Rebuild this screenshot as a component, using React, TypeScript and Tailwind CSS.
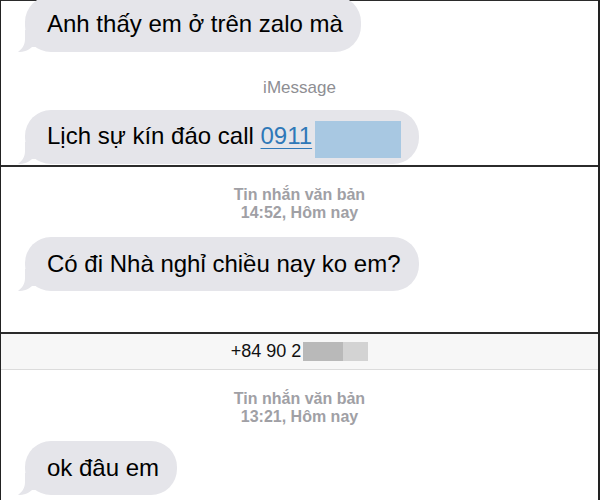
import { type ReactNode } from "react";

const Tail = () => (
  <svg
    className="absolute bottom-0 left-[-7px]"
    width="22"
    height="22"
    viewBox="0 0 22 22"
  >
    <path
      d="M7 0 L7 9 C7 15 4 19 0 22 C6 22 11 20 14 17 L22 17 L22 0 Z"
      fill="#e5e5ea"
    />
  </svg>
);

const Bubble = ({
  children,
  className = "",
}: {
  children: ReactNode;
  className?: string;
}) => (
  <div
    className={`relative ml-[24px] flex h-[54px] w-fit items-center rounded-[26px] bg-[#e5e5ea] pl-[22px] pr-[18px] text-[24px] text-black ${className}`}
  >
    <Tail />
    <span className="relative whitespace-nowrap">{children}</span>
  </div>
);

const Stamp = ({ time }: { time: string }) => (
  <div className="flex flex-col items-center text-[16px] font-semibold leading-[18px] text-[#a0a0a5]">
    <span>Tin nhắn văn bản</span>
    <span>{time}, Hôm nay</span>
  </div>
);

export default function App() {
  return (
    <div
      className="h-[500px] w-[600px] overflow-hidden border-l border-r-2 border-[#222] bg-white"
      style={{ fontFamily: '"Liberation Sans", Arial, sans-serif' }}
    >
      <div className="flex h-[167px] flex-col border-t border-b-2 border-[#2b2b2b]">
        <Bubble className="mt-[-5px] h-[56px]">Anh thấy em ở trên zalo mà</Bubble>
        <div className="mt-[26px] text-center text-[17px] leading-[20px] text-[#8e8e93]">
          iMessage
        </div>
        <Bubble className="mt-[12px] h-[53px] pr-[15px]">
          Lịch sự kín đáo call{" "}
          <span className="text-[#2f78b8] underline decoration-1 underline-offset-[4px]">
            0911
          </span>
          <span className="ml-[3px] inline-block h-[37px] w-[86px] translate-y-[2px] bg-[#a8c8e2] align-middle" />
        </Bubble>
      </div>

      <div className="flex h-[167px] flex-col border-b-2 border-[#2b2b2b] pt-[19px]">
        <Stamp time="14:52" />
        <Bubble className="mt-[15px]">Có đi Nhà nghỉ chiều nay ko em?</Bubble>
      </div>

      <div className="flex flex-col">
        <div className="flex h-[36px] items-center justify-center border-b border-[#dcdcdc] bg-[#f7f7f7]">
          <span className="text-[18px] text-[#111]">+84 90 2</span>
          <span className="ml-[2px] h-[19px] w-[40px] bg-[#b9b9b9]" />
          <span className="h-[19px] w-[25px] bg-[#d3d3d3]" />
        </div>
        <div className="mt-[20px]">
          <Stamp time="13:21" />
        </div>
        <Bubble className="mt-[15px]">ok đâu em</Bubble>
      </div>
    </div>
  );
}
